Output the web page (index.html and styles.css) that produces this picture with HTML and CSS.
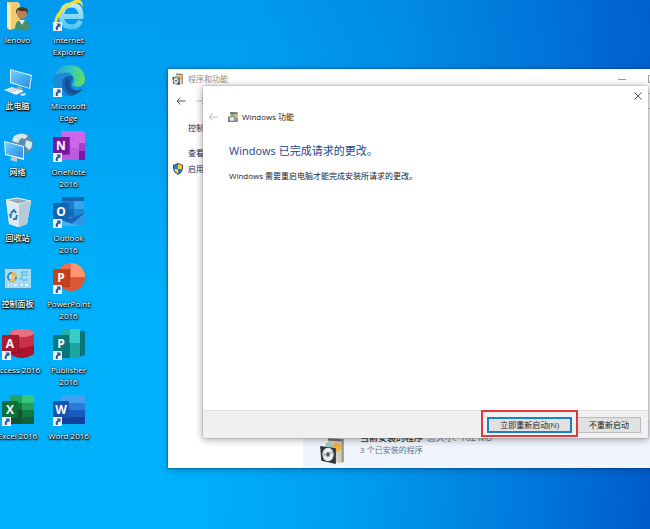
FILE: index.html
```html
<!DOCTYPE html>
<html lang="zh-CN">
<head>
    <meta charset="UTF-8">
    <meta name="viewport" content="width=device-width, initial-scale=1.0">
    <title>Windows 功能</title>
    <link rel="stylesheet" href="styles.css">
</head>
<body>

<svg class="defs" width="0" height="0" aria-hidden="true">
    <defs>
        <linearGradient id="g-ie" gradientUnits="userSpaceOnUse" x1="0" y1="3" x2="0" y2="30">
            <stop offset="0" stop-color="#c4f1ff"/><stop offset="1" stop-color="#4cc4f3"/>
        </linearGradient>
        <linearGradient id="g-edge" x1="0" y1="0" x2="1" y2="0">
            <stop offset="0" stop-color="#2b9fe0"/><stop offset=".5" stop-color="#2fc3c8"/><stop offset="1" stop-color="#6be055"/>
        </linearGradient>
        <linearGradient id="g-screen" x1="0" y1="0" x2="1" y2="1">
            <stop offset="0" stop-color="#80d0ff"/><stop offset=".5" stop-color="#45aef0"/><stop offset="1" stop-color="#2a8fdc"/>
        </linearGradient>
    </defs>
    <symbol id="shortcut" viewBox="0 0 9 9">
        <rect width="9" height="9" fill="#f4f4f6"/>
        <path d="M3.5 1.5h4v4L6.200 4.300Q4.300 5.500 4.600 8H3Q1.800 5 4.800 2.900z" fill="#24559c"/>
    </symbol>
    <symbol id="programs" viewBox="0 0 24 24">
        <path d="M8 1l14 1v20l-4 1-10-4z" fill="#d3cfc0"/>
        <path d="M8 1l14 1-2 2-12-1z" fill="#77705f"/>
        <path d="M20 3l2-1v20l-2 1z" fill="#9a9687"/>
        <circle cx="16" cy="9" r="4" fill="#f0ae3d"/>
        <path d="M6 5l6 1v5l-6-1z" fill="#9fc9b5"/>
        <path d="M1 8l14 2v14L2 21z" fill="#333639"/>
        <ellipse cx="8" cy="15.500" rx="5" ry="6" fill="#e8edef"/>
        <path d="M8 15l4-4 1 4zM8 15l-4 3-1-4z" fill="#b8c4c9"/>
        <ellipse cx="8" cy="15.500" rx="1.500" ry="2" fill="#47515a"/>
    </symbol>
</svg>

<div class="desktop">
    <div class="icons">
        <button class="icon">
            <svg viewBox="0 0 32 32">
                <path d="M5 3h11l2 2v23L7 31l-2-2z" fill="#f0cd70"/>
                <path d="M5 3l4 3v25l-4-3z" fill="#ffe9a6"/>
                <path d="M13 30q0-9 7-9 8 0 8 9-6 3-15 0z" fill="#478d70"/>
                <path d="M17 21l3 5 3-5z" fill="#e3efe9"/>
                <circle cx="20" cy="15" r="5" fill="#b98053"/>
                <path d="M14 15q-1-7 6-7t6 7l-2-3q-5 1-8-1z" fill="#4a3828"/>
            </svg>
            <span>lenovo</span>
        </button>
        <button class="icon">
            <svg viewBox="0 0 32 32">
                <path d="M9 17.500H28Q28 6 18.500 6T8.500 17q0 11 10.500 11 6 0 8.500-6" fill="none" stroke="#1e93cf" stroke-width="6"/>
                <path d="M9 17.500H28Q28 6 18.500 6T8.500 17q0 11 10.500 11 6 0 8.500-6" fill="none" stroke="url(#g-ie)" stroke-width="5"/>
                <path d="M3 28Q-2 20 9 9 21-1 27 1q4 2 2 8 0-5-4-5-5-1-13 6-8 8-9 18z" fill="#f6dc35"/>
                <use href="#shortcut" x="0" y="23" width="9" height="9"/>
            </svg>
            <span>Internet<br>Explorer</span>
        </button>
        <button class="icon">
            <svg viewBox="0 0 32 32">
                <path d="M8 4l22 6-2 14-20-6z" fill="#dcebf3"/>
                <path d="M9 5l20 6-2 12-18-6z" fill="url(#g-screen)"/>
                <path d="M16 21l5 2-1 4-6-1z" fill="#8da6b5"/>
                <path d="M2 25l8-3 12 4-8 4z" fill="#edf2f4"/>
                <path d="M5 25l6 2M8 24l6 2M11 23l6 2" stroke="#9db3c0" stroke-width=".7"/>
                <path d="M18 29l5-1 1 2-4 1z" fill="#e0e7eb"/>
            </svg>
            <span>此电脑</span>
        </button>
        <button class="icon">
            <svg viewBox="0 0 32 32">
                <circle cx="16" cy="15.500" r="15.500" fill="#1561b4"/>
                <path d="M1 12Q4 0 17 0q14 1 15 14 0 8-8 8-5 0-5-3 3-3 1-7-3-5-10-4Q3 9 1 12z" fill="url(#g-edge)"/>
                <path d="M10 8Q3 9 1 12q-2 8 4 14 5 5 12 5-8-4-8-12 0-6 5-8 3-1 6 1-3-5-10-4z" fill="#1b8bd6"/>
                <path d="M14 13q-5 8 2 14 6 4 13-2-7 2-11-1-4-4-1-7-1-2-3-4z" fill="#124d8e"/>
                <path d="M20 13q2 4-1 6 0 3 5 3 5 0 8-4v-3l4 8-4 6-3-5q-8 3-10-2-2-5 1-9z" fill="#0795ee"/>
                <use href="#shortcut" x="0" y="23" width="9" height="9"/>
            </svg>
            <span>Microsoft<br>Edge</span>
        </button>
        <button class="icon">
            <svg viewBox="0 0 32 32">
                <circle cx="20" cy="13" r="11" fill="#548eae"/>
                <path d="M12 5q8-5 14 0l-3 3-4-1-3 5-6-2zM24 9l6 2q1 5-3 8l-4-4z" fill="#d5e8ed"/>
                <path d="M2 10l20 5v14L3 24z" fill="#e4f1f6"/>
                <path d="M3 11l18 5v11L4 23z" fill="url(#g-screen)"/>
                <path d="M10 26l5 1v4l-7-2z" fill="#bccbd2"/>
            </svg>
            <span>网络</span>
        </button>
        <button class="icon">
            <svg viewBox="0 0 32 32">
                <path d="M8 0h22l2 2v15H8z" fill="#cc67ea"/>
                <path d="M26 12h6v8h-6z" fill="#a341cb"/>
                <path d="M26 20h6v9h-6z" fill="#771aa8"/>
                <path d="M8 17h18v12H8z" fill="#bb5bdc"/>
                <path d="M2 6h15v18H2z" fill="#8a2eb0"/>
                <rect x="0" y="6" width="16" height="17" rx="1" fill="#7319a0"/>
                <text x="8" y="19">N</text>
                <use href="#shortcut" x="0" y="22" width="9" height="9"/>
            </svg>
            <span>OneNote<br>2016</span>
        </button>
        <button class="icon">
            <svg viewBox="0 0 32 32">
                <path d="M4 3l11-2 14 3-4 23-9 3-9-3z" fill="#cfdee7"/>
                <path d="M4 3l12 4 13-3-4 23-9 3-9-3z" fill="#dfe9ef"/>
                <path d="M4 3l11-2 14 3-13 3z" fill="#93adbb" stroke="#f1f7fa"/>
                <path d="M17 7l12-3-4 23-8 3z" fill="#b5cbd8"/>
                <path d="M9 16l3-3 2 3M15 18l-1 4h-3M9 21l-1-3 2-1" fill="none" stroke="#2478bd" stroke-width="2"/>
            </svg>
            <span>回收站</span>
        </button>
        <button class="icon">
            <svg viewBox="0 0 32 32">
                <path d="M9 0h22v10H9z" fill="#1266ad"/>
                <path d="M9 4h12v8H9z" fill="#197ed0"/>
                <path d="M21 4h10v8H21z" fill="#35a6ee"/>
                <path d="M9 12h12v8H9z" fill="#1669b4"/>
                <path d="M21 12h10v8H21z" fill="#1f85d6"/>
                <path d="M7 18l13 7 12-9v13H7z" fill="#2a9ae7"/>
                <path d="M32 16L16 29H7v-4z" fill="#1766b4"/>
                <path d="M7 23l19 6H7z" fill="#46b3ef"/>
                <rect x="0" y="6" width="16" height="17" rx="1" fill="#0e65b6"/>
                <text x="8" y="19">O</text>
                <use href="#shortcut" x="0" y="22" width="9" height="9"/>
            </svg>
            <span>Outlook<br>2016</span>
        </button>
        <button class="icon">
            <svg viewBox="0 0 32 32">
                <rect x="2" y="5" width="28" height="21" fill="#3d9bd0"/>
                <rect x="3" y="6" width="26" height="19" fill="#9edcf7"/>
                <circle cx="10" cy="14" r="5" fill="#2d8ad0"/>
                <circle cx="10" cy="14" r="3" fill="#c3e8f7"/>
                <path d="M10 14V9q5 0 5 5zM10 14l4 3q-3 3-7 1z" fill="#f3bb54"/>
                <path d="M17 16h3V9h6M21 12h5M21 17h5" fill="none" stroke="#5ba7cf" stroke-width="1"/>
                <path d="M6 22h9M19 22h7" stroke="#e9faff" stroke-width="2"/>
                <path d="M8 21v2M11 21v2M22 21v2" stroke="#53a5ce"/>
            </svg>
            <span>控制面板</span>
        </button>
        <button class="icon">
            <svg viewBox="0 0 32 32">
                <circle cx="18" cy="14" r="14" fill="#dc5837"/>
                <path d="M18 0a14 14 0 0 1 14 14H18z" fill="#ff9470"/>
                <path d="M18 0v14H4A14 14 0 0 1 18 0z" fill="#ec704d"/>
                <rect x="2" y="6" width="15" height="18" fill="#ae3a22"/>
                <rect x="0" y="6" width="16" height="17" rx="1" fill="#c4401f"/>
                <text x="8" y="19">P</text>
                <use href="#shortcut" x="0" y="22" width="9" height="9"/>
            </svg>
            <span>PowerPoint<br>2016</span>
        </button>
        <button class="icon">
            <svg viewBox="0 0 32 32">
                <path d="M8 4v21q11 8 24 0V4z" fill="#a9142c"/>
                <path d="M8 4v12q12 6 24 0V4z" fill="#ca3049"/>
                <ellipse cx="20" cy="4" rx="12" ry="4" fill="#ea7080"/>
                <rect x="2" y="6" width="15" height="18" fill="#911026"/>
                <rect x="0" y="6" width="16" height="17" rx="1" fill="#ab1930"/>
                <text x="8" y="19">A</text>
                <use href="#shortcut" x="0" y="22" width="9" height="9"/>
            </svg>
            <span>Access 2016</span>
        </button>
        <button class="icon">
            <svg viewBox="0 0 32 32">
                <path d="M26 2h6v24l-6 2z" fill="#07737a"/>
                <path d="M8 0h19v29H8z" fill="#1aa7a2"/>
                <path d="M8 0h9v14H8z" fill="#27aea8"/>
                <path d="M17 0h10v14H17z" fill="#39cdc8"/>
                <path d="M8 14h9v15H8z" fill="#0a7475"/>
                <rect x="0" y="6" width="16" height="17" rx="1" fill="#07787a"/>
                <text x="8" y="19">P</text>
                <use href="#shortcut" x="0" y="22" width="9" height="9"/>
            </svg>
            <span>Publisher<br>2016</span>
        </button>
        <button class="icon">
            <svg viewBox="0 0 32 32">
                <path d="M8 0h12v8H8z" fill="#21a366"/>
                <path d="M20 0h12v8H20z" fill="#36c67a"/>
                <path d="M8 8h12v7H8z" fill="#12733c"/>
                <path d="M20 8h12v7H20z" fill="#21a05f"/>
                <path d="M8 15h12v14H8z" fill="#16512f"/>
                <path d="M20 15h12v7H20z" fill="#117a40"/>
                <path d="M20 22h12v7H20z" fill="#15603a"/>
                <rect x="0" y="6" width="16" height="17" rx="1" fill="#0d7039"/>
                <text x="8" y="19">X</text>
                <use href="#shortcut" x="0" y="22" width="9" height="9"/>
            </svg>
            <span>Excel 2016</span>
        </button>
        <button class="icon">
            <svg viewBox="0 0 32 32">
                <path d="M8 0h24v8H8z" fill="#43a0f0"/>
                <path d="M8 8h24v7H8z" fill="#2a7cd6"/>
                <path d="M8 15h24v7H8z" fill="#195bbe"/>
                <path d="M8 22h24v7H8z" fill="#12419d"/>
                <rect x="0" y="6" width="16" height="17" rx="1" fill="#1551ae"/>
                <text x="8" y="19">W</text>
                <use href="#shortcut" x="0" y="22" width="9" height="9"/>
            </svg>
            <span>Word 2016</span>
        </button>
    </div>

    <div class="window">
        <div class="titlebar">
            <svg class="small-icon" viewBox="0 0 24 24"><use href="#programs"/></svg>
            <span class="title">程序和功能</span>
            <button class="caption" aria-label="最小化"><svg viewBox="0 0 10 10"><path d="M1 5.500h8"/></svg></button>
            <button class="caption" aria-label="最大化"><svg viewBox="0 0 10 10"><path d="M1.500 1.500h7v7h-7z"/></svg></button>
        </div>
        <div class="toolbar">
            <button class="arrow" aria-label="后退"><svg viewBox="0 0 10 10"><path d="M9.500 5H1M4.500 1.500L1 5l3.500 3.500"/></svg></button>
            <button class="arrow disabled" aria-label="前进"><svg viewBox="0 0 10 10"><path d="M.5 5H9M5.500 1.500L9 5 5.500 8.500"/></svg></button>
            <input class="address" type="text" aria-label="地址">
        </div>
        <div class="content">
            <div class="sidebar">
                <a class="home" href="#">控制</a>
                <a href="#">查看</a>
                <a href="#">
                    <svg class="shield" viewBox="0 0 12 12">
                        <path d="M6 0l5 2q1 7-5 10Q0 9 1 2z" fill="#3b4a55"/>
                        <path d="M6 1v5H2V2.500z" fill="#2f7fd0"/>
                        <path d="M6 1l4 1.500V6H6z" fill="#f5cf3e"/>
                        <path d="M2 6h4v5Q3 9 2 6z" fill="#f5cf3e"/>
                        <path d="M6 6h4q-1 3-4 5z" fill="#2f7fd0"/>
                    </svg>
                    启用
                </a>
            </div>
            <div class="details">
                <svg class="large-icon" viewBox="0 0 24 24"><use href="#programs"/></svg>
                <div class="summary">
                    <div class="totals"><b>当前安装的程序</b><span>总大小:</span><span>162 MB</span></div>
                    <div>3 个已安装的程序</div>
                </div>
            </div>
        </div>
    </div>

    <div class="dialog" role="dialog" aria-labelledby="dialog-title">
        <button class="close" aria-label="关闭"><svg viewBox="0 0 10 10"><path d="M1.500 1.500l7 7M8.500 1.500l-7 7"/></svg></button>
        <div class="dialog-header">
            <button class="arrow disabled" aria-label="后退"><svg viewBox="0 0 10 10"><path d="M9.500 5H1M4.500 1.500L1 5l3.500 3.500"/></svg></button>
            <svg class="small-icon" viewBox="0 0 24 24">
                <path d="M6 2l16 1v19H6z" fill="#b9bdb2"/>
                <path d="M6 2l16 1-2 3H7z" fill="#6d7169"/>
                <path d="M16 6h5v6h-5z" fill="#dfb94e"/>
                <path d="M8 7h6v6H8z" fill="#79a69b"/>
                <path d="M2 11l14 1v10H2z" fill="#758186"/>
                <ellipse cx="10" cy="16" rx="5" ry="4" fill="#e2e8ea"/>
                <path d="M15 14h7v8h-7z" fill="#89949a"/>
            </svg>
            <span id="dialog-title">Windows 功能</span>
        </div>
        <div class="dialog-body">
            <h1>Windows 已完成请求的更改。</h1>
            <p>Windows 需要重启电脑才能完成安装所请求的更改。</p>
        </div>
        <div class="dialog-footer">
            <div class="marked"><button class="btn primary">立即重新启动(N)</button></div>
            <button class="btn">不重新启动</button>
        </div>
    </div>
</div>

</body>
</html>
```
FILE: styles.css
```css
* {
    box-sizing: border-box;
}

body {
    margin: 0;
    font-family: "Open Sans", "Noto Sans CJK SC", sans-serif;
    font-size: 8px;
    line-height: 12px;
    color: #222;
}

button {
    font: inherit;
    color: inherit;
    padding: 0;
    border: none;
    background: none;
}

svg {
    display: block;
    flex: none;
}

a {
    color: #1f2a4d;
    text-decoration: none;
}

.defs {
    position: absolute;
}

.desktop {
    position: relative;
    height: 100vh;
    overflow: hidden;
    background:
        linear-gradient(to bottom, rgba(0, 70, 190, 0.2), rgba(0, 120, 220, 0) 55%),
        linear-gradient(95deg, #00b0fc 0%, #00b0fa 35%, #009cee 58%, #007cde 80%, #005acc 100%);
}

/* desktop icons */
.icons {
    display: grid;
    grid-template-columns: 51px 51px;
    grid-auto-rows: 66px;
    justify-content: start;
    margin: -1px 0 0 -8px;
}

.icon {
    display: flex;
    flex-direction: column;
    align-items: center;
    gap: 3px;
    color: #fff;
    font-weight: 500;
    text-shadow: 0 1px 1px #000, 1px 1px 2px #000, 0 0 2px #000;
    white-space: nowrap;
}

.icon svg {
    width: 32px;
    height: 32px;
}

.icon text {
    fill: #fff;
    font-size: 12px;
    font-weight: 700;
    text-anchor: middle;
    text-shadow: none;
}

/* programs and features window */
.window {
    position: absolute;
    top: 69px;
    right: -40px;
    bottom: 61px;
    left: 168px;
    display: flex;
    flex-direction: column;
    background: #fff;
    box-shadow: 0 0 2px rgba(0, 40, 80, 0.8), 0 2px 8px rgba(0, 40, 80, 0.3);
}

.titlebar {
    display: flex;
    align-items: center;
    gap: 4px;
    height: 20px;
    padding-left: 4px;
    padding-right: 33px;
    color: #8c8c8c;
}

.small-icon {
    width: 12px;
    height: 12px;
}

.title {
    flex: 1;
}

.caption {
    margin-left: 16px;
}

.caption svg,
.arrow svg,
.close svg {
    width: 10px;
    height: 10px;
    fill: none;
    stroke: #555;
}

.caption svg {
    stroke: #999;
}

.arrow.disabled svg {
    stroke: #bbb;
}

.toolbar {
    display: flex;
    align-items: center;
    gap: 10px;
    height: 24px;
    padding-left: 8px;
}

.address {
    flex: 1;
    height: 16px;
    border: 1px solid #d0d0d0;
}

.content {
    flex: 1;
    display: flex;
}

.sidebar {
    width: 135px;
    padding: 9px 0 0 20px;
}

.sidebar a {
    display: flex;
    height: 16px;
}

.sidebar .home {
    height: 25px;
}

.shield {
    width: 12px;
    height: 12px;
    margin-left: -16px;
    margin-right: 4px;
}

.details {
    flex: 1;
    align-self: flex-end;
    display: flex;
    align-items: center;
    gap: 14px;
    height: 48px;
    padding-left: 16px;
    background: #f0f4fc;
    color: #69727e;
}

.large-icon {
    width: 27px;
    height: 27px;
    margin-top: 12px;
}

.totals {
    display: flex;
    gap: 4px;
    font-size: 9px;
}

.totals b {
    color: #333;
    font-weight: 500;
}

/* restart dialog */
.dialog {
    position: absolute;
    top: 86px;
    right: 2px;
    bottom: 91px;
    left: 203px;
    display: flex;
    flex-direction: column;
    background: #fff;
    box-shadow: 0 0 1px #777, 0 1px 8px rgba(0, 0, 0, 0.4);
}

.close {
    align-self: flex-end;
    margin: 5px 5px 0 0;
}

.dialog-header {
    display: flex;
    align-items: center;
    padding: 10px 5px;
}

.dialog-header .small-icon {
    margin-left: 9px;
    margin-right: 3px;
}

.dialog-body {
    flex: 1;
    padding: 9px 26px;
}

.dialog-body h1 {
    margin: 0 0 10px;
    font-size: 11px;
    font-weight: 400;
    line-height: 18px;
    color: #1c4587;
}

.dialog-body p {
    margin: 0;
}

.dialog-footer {
    display: flex;
    justify-content: flex-end;
    align-items: center;
    gap: 5px;
    height: 28px;
    padding-right: 7px;
    border-top: 1px solid #dfdfdf;
    background: #f0f0f0;
}

.btn {
    height: 16px;
    padding: 0 11px;
    border: 1px solid #bcbcbc;
    background: #e1e1e1;
    line-height: 14px;
}

.btn.primary {
    border: 2px solid #1a80c8;
    line-height: 12px;
}

.marked {
    position: relative;
    display: flex;
}

/* red highlight around the restart button */
.marked::after {
    content: "";
    position: absolute;
    inset: -7px -6px -4px;
    border: 2px solid #e0383e;
    pointer-events: none;
}
```
